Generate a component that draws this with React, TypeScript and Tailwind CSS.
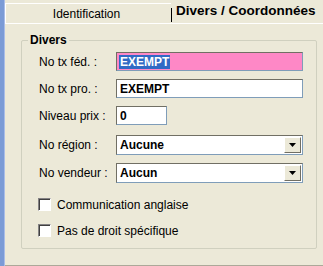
import React from 'react';

function Field({label, children}: {label: string; children: React.ReactNode}) {
    return (
        <div className="flex items-center h-[19px]">
            <div className="w-[94px] shrink-0 whitespace-nowrap pl-[17px] text-[12px] text-black">{label}</div>
            {children}
        </div>
    );
}

function Combo({value}: {value: string}) {
    return (
        <div className="flex w-[187px] h-[20px] bg-white border border-[#7f9db9] border-t-[#716f64] border-l-[#716f64] items-center">
            <div className="flex-1 pl-[3px] font-bold text-[12px] text-black">{value}</div>
            <div className="w-[17px] h-[16px] mr-[1px] bg-[#ece9d8] border border-t-white border-l-white border-r-[#716f64] border-b-[#716f64] flex items-center justify-center">
                <svg width="7" height="4" viewBox="0 0 7 4">
                    <path d="M0 0h7L3.5 4z" fill="#000" />
                </svg>
            </div>
        </div>
    );
}

function Check({label}: {label: string}) {
    return (
        <div className="flex items-center gap-[6px] pl-[16px] h-[13px]">
            <div className="w-[13px] h-[13px] bg-white border border-[#848284] border-r-white border-b-white shadow-[inset_1px_1px_0_#404040]" />
            <span className="text-[12px] text-black">{label}</span>
        </div>
    );
}

export default function App() {
    return (
        <div className="w-[323px] h-[266px] bg-[#ece9d8] flex overflow-hidden" style={{fontFamily: '"Liberation Sans", Arial, sans-serif'}}>
            <div className="w-[5px] shrink-0 bg-[#7b9bd6] border-r border-[#a9bde8]" />
            <div className="flex-1 min-w-0 flex flex-col">
                <div className="flex h-[23px] items-end">
                    <div className="w-[166px] shrink-0 h-[20px] border-t border-l border-white flex items-center justify-center text-[12px] text-black pr-[4px]">
                        Identification
                    </div>
                    <div className="w-[1px] shrink-0 h-[14px] bg-black mb-[1px]" />
                    <div className="flex-1 h-[23px] flex items-center pl-[4px] font-bold text-[13.5px] text-black whitespace-nowrap">
                        Divers / Coordonnées
                    </div>
                </div>
                <div className="flex-1 border-t border-white border-b border-b-[#aca899] px-[16px] pt-[16px]">
                    <div className="relative w-[296px] h-[209px] border border-[#d0d0bf] rounded-[2px] pt-[11px] flex flex-col gap-[8px]">
                        <span className="absolute -top-[8px] left-[6px] px-[2px] bg-[#ece9d8] font-bold text-[12px] text-black leading-[14px]">Divers</span>
                        <Field label="No tx féd. :">
                            <div className="w-[187px] h-[19px] bg-[#fe88c6] border border-[#7f9db9] border-t-[#716f64] border-l-[#716f64] flex items-center pl-[2px]">
                                <span className="bg-[#316ac5] text-white font-bold text-[12px] px-[1px] leading-[14px]">EXEMPT</span>
                            </div>
                        </Field>
                        <Field label="No tx pro. :">
                            <div className="w-[187px] h-[19px] bg-white border border-[#7f9db9] border-t-[#716f64] border-l-[#716f64] flex items-center pl-[3px] font-bold text-[12px] text-black">
                                EXEMPT
                            </div>
                        </Field>
                        <Field label="Niveau prix :">
                            <div className="w-[51px] h-[19px] bg-white border border-[#7f9db9] border-t-[#716f64] border-l-[#716f64] flex items-center pl-[3px] font-bold text-[12px] text-black">
                                0
                            </div>
                        </Field>
                        <div className="pt-[2px] flex flex-col gap-[9px]">
                            <Field label="No région :">
                                <Combo value="Aucune" />
                            </Field>
                            <Field label="No vendeur :">
                                <Combo value="Aucun" />
                            </Field>
                        </div>
                        <div className="pt-[8px] flex flex-col gap-[13px]">
                            <Check label="Communication anglaise" />
                            <Check label="Pas de droit spécifique" />
                        </div>
                    </div>
                </div>
            </div>
        </div>
    );
}
